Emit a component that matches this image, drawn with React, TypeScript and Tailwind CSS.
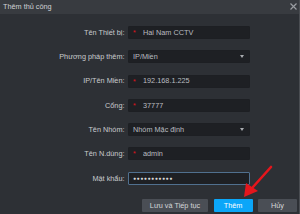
import React from 'react'

type Row = {
  label: string
  value: string
  required?: boolean
  select?: boolean
  password?: boolean
}

const rows: Row[] = [
  { label: 'Tên Thiết bị:', value: 'Hai Nam CCTV', required: true },
  { label: 'Phương pháp thêm:', value: 'IP/Miền', select: true },
  { label: 'IP/Tên Miền:', value: '192.168.1.225', required: true },
  { label: 'Cổng:', value: '37777', required: true },
  { label: 'Tên Nhóm:', value: 'Nhóm Mặc định', select: true },
  { label: 'Tên N.dùng:', value: 'admin', required: true },
  { label: 'Mật khẩu:', value: '●●●●●●●●●●●', password: true },
]

function Field({ row }: { row: Row }) {
  const border = row.password ? 'border-[#50708f]' : 'border-[#1d1f23]'
  return (
    <div className={`w-[122px] h-[13px] bg-[#1e2024] border ${border} rounded-[1px] flex items-center pl-[4px] pr-[5px]`}>
      {row.required && <span className="text-[#e0121b] text-[7px] w-[7px] leading-none">*</span>}
      {row.required && <span className="w-[3px]" />}
      <span className={`flex-1 truncate ${row.password ? 'text-[5px] tracking-[0.6px] text-[#d8d8d8]' : 'text-[#b9bcc0]'}`}>
        {row.value}
      </span>
      {row.select && (
        <span className="w-0 h-0 border-l-[2.5px] border-r-[2.5px] border-t-[3px] border-l-transparent border-r-transparent border-t-[#a9acb0]" />
      )}
    </div>
  )
}

export default function App() {
  return (
    <div
      className="relative w-[300px] h-[214px] overflow-hidden bg-[#2d3035] text-[7.3px] leading-none border-r border-[#4a4d52]"
      style={{ fontFamily: '"Liberation Sans", Arial, sans-serif' }}
    >
      <div className="h-[14px] bg-[#383b40] flex items-center justify-between pl-[3px] pr-[2px]">
        <span className="text-[#d0d2d5]">Thêm thủ công</span>
        <svg width="7" height="7" viewBox="0 0 7 7" className="mb-[1px]">
          <path d="M0.5 0.5 L6.5 6.5 M6.5 0.5 L0.5 6.5" stroke="#9a9da2" strokeWidth="1.2" />
        </svg>
      </div>

      <div className="pt-[12px] flex flex-col gap-[11.3px]">
        {rows.map(row => (
          <div key={row.label} className="flex items-center h-[13px]">
            <div className="w-[124.5px] text-right text-[#c9cbce]">{row.label}</div>
            <div className="w-[3.5px]" />
            <Field row={row} />
          </div>
        ))}
      </div>

      <div className="mt-[14px] flex justify-end gap-[5.5px] pr-[2px]">
        <button className="w-[66px] h-[13px] bg-[#4a4e55] text-[#d5d7da] rounded-[1px]">Lưu và Tiếp tục</button>
        <button className="w-[39px] h-[13px] bg-[#0ba6f8] text-white rounded-[1px]">Thêm</button>
        <button className="w-[39px] h-[13px] bg-[#4a4e55] text-[#d5d7da] rounded-[1px]">Hủy</button>
      </div>

      <svg className="absolute left-0 top-0 pointer-events-none" width="300" height="214" viewBox="0 0 300 214">
        <line x1="271" y1="167" x2="253" y2="187" stroke="#e5161c" strokeWidth="2.6" strokeLinecap="round" />
        <polygon points="244,197 246,183 258,191" fill="#e5161c" />
      </svg>
    </div>
  )
}
